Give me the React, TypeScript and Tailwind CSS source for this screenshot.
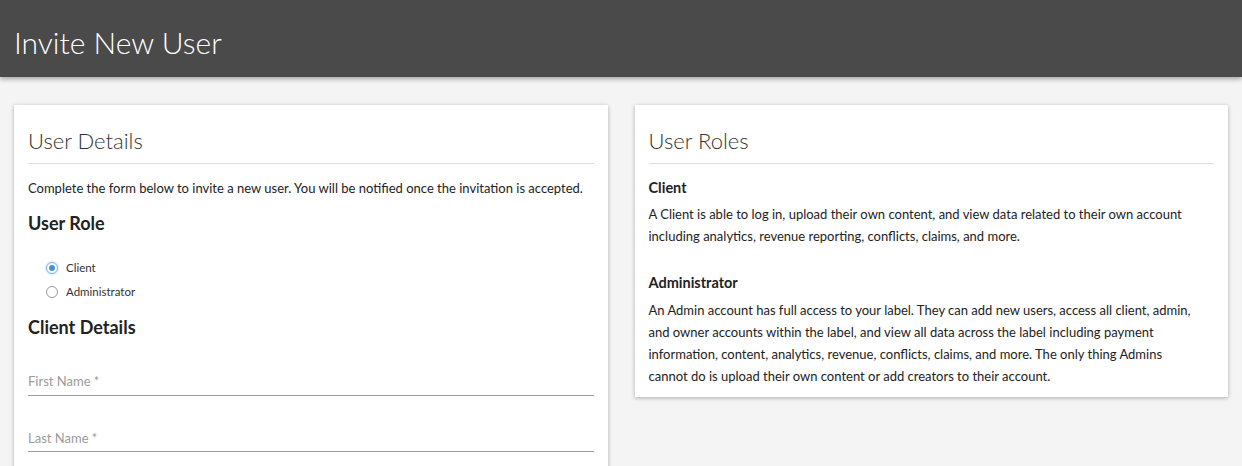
import React from "react";

export default function App() {
  const font = { fontFamily: "Lato, 'Open Sans', sans-serif" };
  return (
    <div className="min-h-[466px] bg-[#f4f4f4] text-[#222]" style={font}>
      <header className="h-[77px] bg-[#4a4a4a] shadow-[0_2px_5px_rgba(0,0,0,0.35)] relative z-10 flex items-center px-[14px]">
        <h1 className="text-[30px] font-light text-white leading-none pt-[7px]">Invite New User</h1>
      </header>
      <div className="grid grid-cols-2 gap-[27px] px-[14px] pt-[28px] items-start">
        <section className="bg-white shadow-[0_1px_4px_rgba(0,0,0,0.3)] px-[14px] pt-[22px] pb-[20px]">
          <h2 className="text-[22px] font-light leading-[28px] text-[#333]">User Details</h2>
          <div className="h-px bg-[#ddd] mt-[8px]" />
          <p className="text-[13px] mt-[15px] leading-[18px]">
            Complete the form below to invite a new user. You will be notified once the invitation is accepted.
          </p>
          <h3 className="text-[18px] font-bold mt-[15px] leading-[22px]">User Role</h3>
          <div className="mt-[26px] pl-[18px] flex flex-col gap-[8px]">
            <label className="flex items-center gap-[8px] text-[11.5px] leading-[16px] text-[#333]">
              <span className="w-[12px] h-[12px] rounded-full border border-[#7aaee0] flex items-center justify-center shadow-[0_0_2px_rgba(74,144,226,0.6)]">
                <span className="w-[6px] h-[6px] rounded-full bg-[#4a8fdc]" />
              </span>
              Client
            </label>
            <label className="flex items-center gap-[8px] text-[11.5px] leading-[16px] text-[#333]">
              <span className="w-[12px] h-[12px] rounded-full border border-[#999]" />
              Administrator
            </label>
          </div>
          <h3 className="text-[18px] font-bold mt-[16px] leading-[22px]">Client Details</h3>
          <div className="mt-[34px] border-b border-[#999] pb-[3px] text-[13px] text-[#9b9b9b]">First Name *</div>
          <div className="mt-[33px] border-b border-[#999] pb-[3px] text-[13px] text-[#9b9b9b]">Last Name *</div>
        </section>
        <section className="bg-white shadow-[0_1px_4px_rgba(0,0,0,0.3)] px-[14px] pt-[22px] pb-[10px]">
          <h2 className="text-[22px] font-light leading-[28px] text-[#333]">User Roles</h2>
          <div className="h-px bg-[#ddd] mt-[8px]" />
          <h4 className="text-[14.5px] font-bold mt-[14px] leading-[20px]">Client</h4>
          <p className="text-[13px] leading-[22px] mt-[5px] pr-[16px]">
            A Client is able to log in, upload their own content, and view data related to their own account including analytics, revenue reporting, conflicts, claims, and more.
          </p>
          <h4 className="text-[14.5px] font-bold mt-[26px] leading-[20px]">Administrator</h4>
          <p className="text-[13px] leading-[22px] mt-[6px] pr-[16px]">
            An Admin account has full access to your label. They can add new users, access all client, admin, and owner accounts within the label, and view all data across the label including payment information, content, analytics, revenue, conflicts, claims, and more. The only thing Admins cannot do is upload their own content or add creators to their account.
          </p>
        </section>
      </div>
    </div>
  );
}
